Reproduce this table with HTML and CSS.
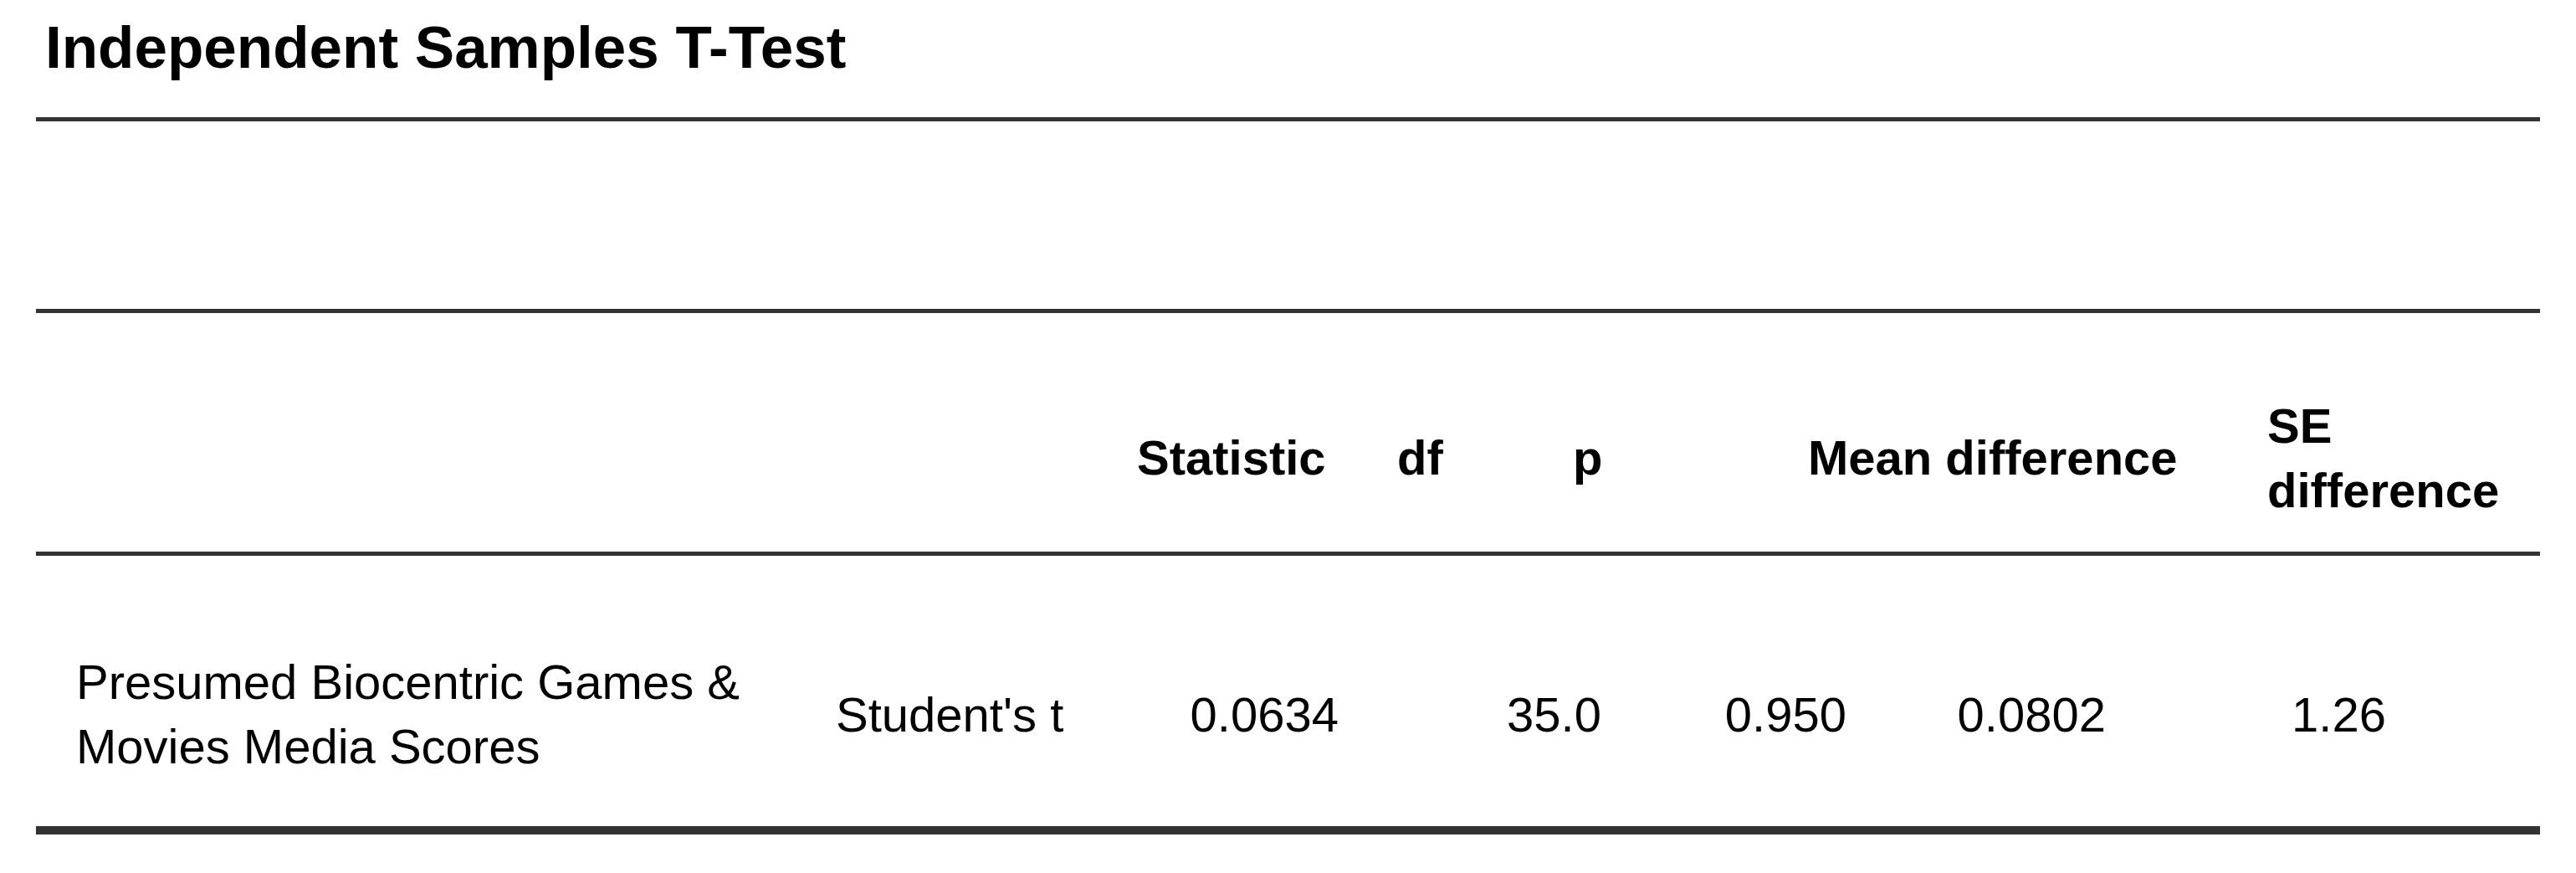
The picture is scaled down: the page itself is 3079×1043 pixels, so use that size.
FILE: index.html
```html
<!DOCTYPE html>
<html lang="en">
<head>
<meta charset="utf-8">
<title>Independent Samples T-Test</title>
<link rel="stylesheet" href="styles.css">
</head>
<body>
<div class="page">
  <h1 class="title">Independent Samples T-Test</h1>
  <div class="ttable">
    <div class="caption-row"></div>
    <div class="head-row">
      <div class="hcell"></div>
      <div class="hcell">Statistic</div>
      <div class="hcell">df</div>
      <div class="hcell">p</div>
      <div class="hcell">Mean difference</div>
      <div class="hcell">SE difference</div>
    </div>
    <div class="body-row">
      <div class="cell name">Presumed Biocentric Games &amp; Movies Media Scores</div>
      <div class="cell test">Student's t</div>
      <div class="cell num">0.0634</div>
      <div class="cell num">35.0</div>
      <div class="cell num">0.950</div>
      <div class="cell num">0.0802</div>
      <div class="cell num">1.26</div>
    </div>
  </div>
</div>
</body>
</html>
```

FILE: styles.css
```css
html, body {
  margin: 0;
  padding: 0;
  background: #ffffff;
}

body {
  font-family: "Liberation Sans", Arial, sans-serif;
  color: #000000;
}

.page {
  width: 3079px;
  height: 1043px;
  overflow: hidden;
}

.title {
  margin: 17px 0 0 54px;
  font-size: 71px;
  line-height: 80px;
  font-weight: 700;
}

.ttable {
  margin: 43px 0 0 43px;
  width: 2993px;
  font-size: 58px;
  line-height: 77px;
}

.caption-row {
  height: 224px;
  border-top: 5px solid #333333;
}

.head-row {
  box-sizing: border-box;
  height: 295px;
  padding-top: 60px;
  border-top: 5px solid #333333;
  border-bottom: 5px solid #333333;
  display: grid;
  grid-template-columns: 1316px 311px 210px 281px 549px 1fr;
  align-items: center;
  font-weight: 700;
}

.body-row {
  box-sizing: border-box;
  height: 333px;
  padding-top: 55px;
  border-bottom: 10px solid #333333;
  display: grid;
  grid-template-columns: 956px 341px 260px 314px 293px 310px 335px;
  align-items: center;
}

.name {
  padding-left: 48px;
}

.num {
  text-align: right;
}
```
